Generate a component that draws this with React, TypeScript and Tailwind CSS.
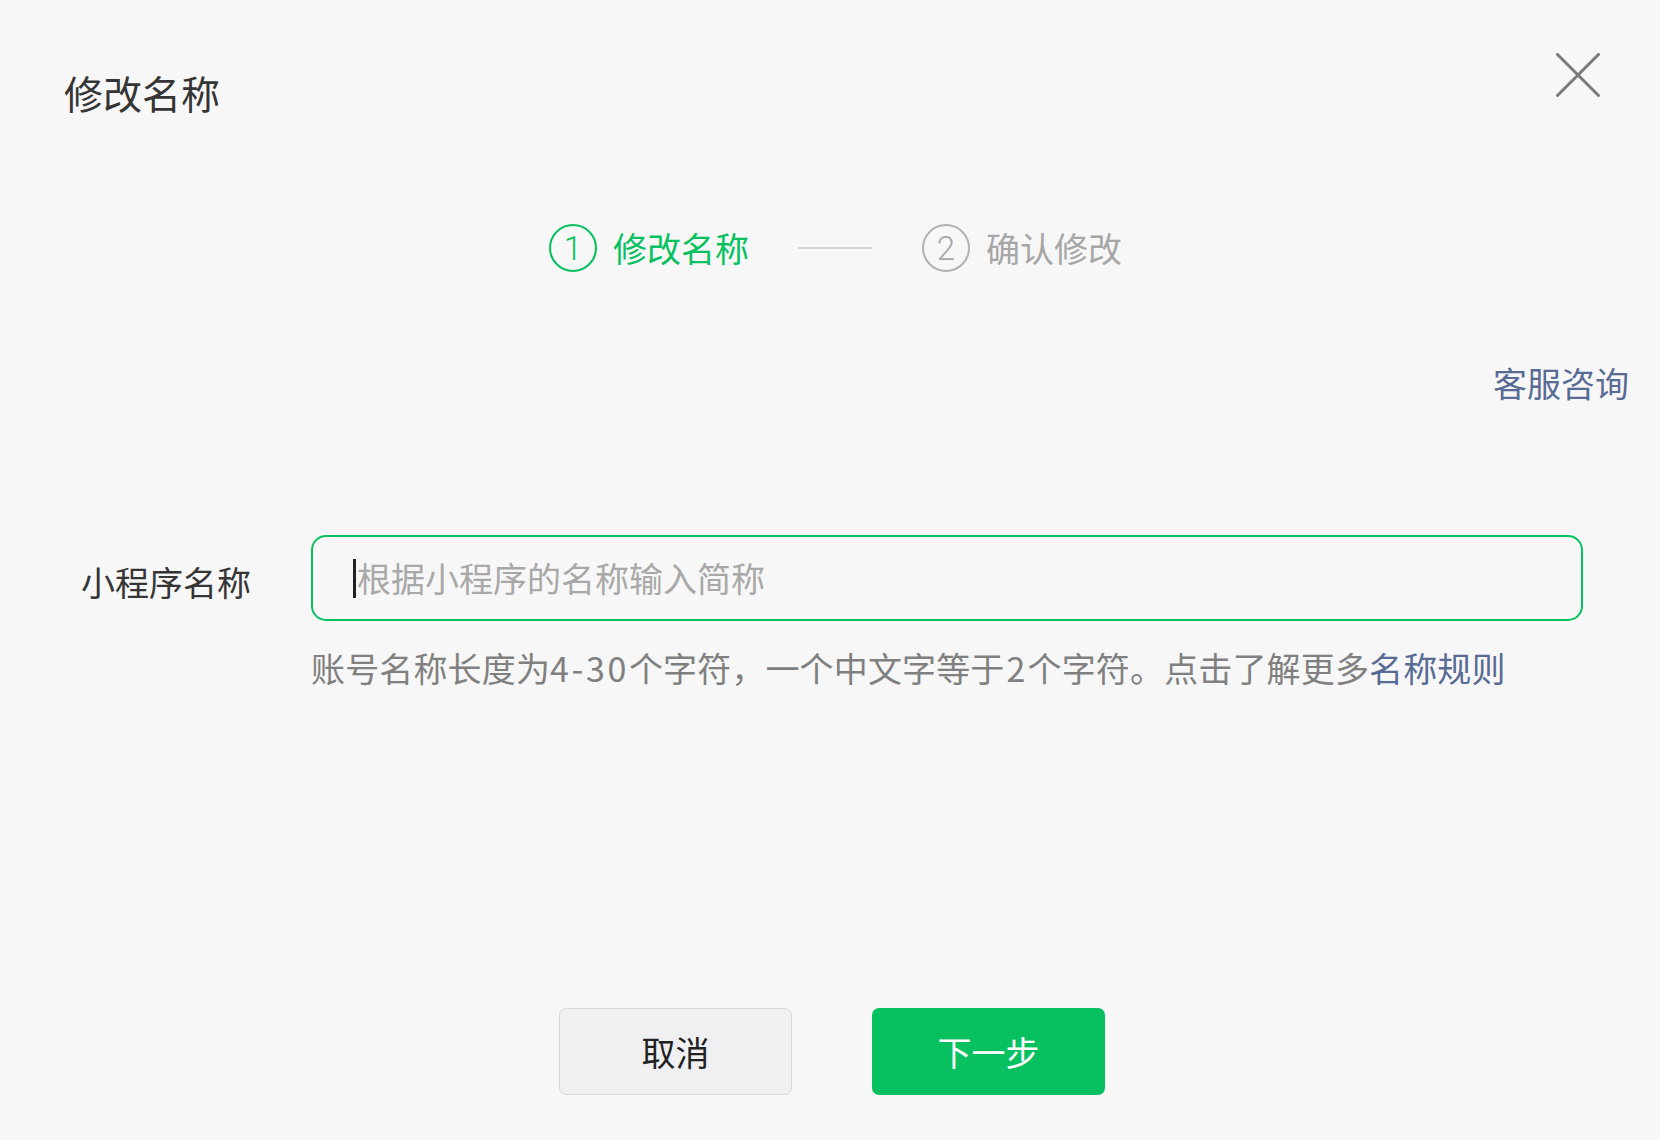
import React from 'react'

const cjk = "font-['Noto_Sans_CJK_SC','Noto_Sans',sans-serif]"

function StepCircle({ n, active }: { n: number; active: boolean }) {
  return (
    <div
      className={
        active
          ? "w-[48px] h-[48px] rounded-full border-2 border-[#07c160] text-[#07c160] flex items-center justify-center text-[33px] font-light font-['Roboto',sans-serif] leading-none"
          : "w-[48px] h-[48px] rounded-full border-2 border-[#b2b2b2] text-[#a6a6a6] flex items-center justify-center text-[33px] font-light font-['Roboto',sans-serif] leading-none"
      }
    >
      {n}
    </div>
  )
}

export default function App() {
  return (
    <div className={`w-[1660px] h-[1140px] bg-[#f7f7f7] flex flex-col ${cjk}`}>
      {/* header */}
      <div className="flex justify-between items-start">
        <h1 className="mt-[73px] ml-[64px] text-[39px] leading-none text-[#353535] font-normal">修改名称</h1>
        <button className="mt-[53px] mr-[60px] w-[44px] h-[44px] text-[#7a7a7a]" aria-label="关闭">
          <svg viewBox="0 0 44 44" className="w-[44px] h-[44px]" fill="none" stroke="currentColor" strokeWidth="3" strokeLinecap="round">
            <path d="M1.5 1.5 L42.5 42.5 M42.5 1.5 L1.5 42.5" />
          </svg>
        </button>
      </div>

      {/* steps */}
      <div className="mt-[112px] h-[48px] flex justify-center items-center pl-[11px]">
        <StepCircle n={1} active />
        <span className="ml-[16px] text-[34px] leading-none text-[#07c160]">修改名称</span>
        <div className="ml-[49px] w-[74px] h-[2px] bg-[#d6d6d6]" />
        <div className="ml-[50px]">
          <StepCircle n={2} active={false} />
        </div>
        <span className="ml-[16px] text-[34px] leading-none text-[#a6a6a6]">确认修改</span>
      </div>

      {/* service link */}
      <div className="mt-[94px] flex justify-end pr-[31px]">
        <a className="text-[34px] leading-none text-[#576b95] cursor-pointer">客服咨询</a>
      </div>

      {/* name input */}
      <div className="mt-[135px] flex items-center pl-[81px]">
        <label className="w-[230px] text-[34px] leading-none text-[#353535] pt-[8px]">小程序名称</label>
        <div className="w-[1272px] h-[86px] rounded-[15px] border-2 border-[#07c160] flex items-center pl-[40px]">
          <span className="w-[3px] h-[39px] bg-[#222]" />
          <span className="ml-[1px] text-[34px] leading-none text-[#a8a8a8]">根据小程序的名称输入简称</span>
        </div>
      </div>

      {/* hint */}
      <p className="mt-[30px] pl-[311px] text-[34px] leading-none text-[#808080] tracking-[0.15px]">
        账号名称长度为<span className="tracking-[2.6px]">4-30</span>个字符，一个中文字等于<span className="pl-[2px] pr-[2px]">2</span>个字符。点击了解更多<a className="text-[#576b95] cursor-pointer">名称规则</a>
      </p>

      {/* actions */}
      <div className="mt-[323px] flex justify-center gap-[80px] pl-[4px]">
        <button className="w-[233px] h-[87px] rounded-[7px] bg-[#f0f0f2] border border-[#d9d9d9] text-[34px] text-[#222]">取消</button>
        <button className="w-[233px] h-[87px] rounded-[7px] bg-[#07c160] text-[34px] text-white">下一步</button>
      </div>
    </div>
  )
}
